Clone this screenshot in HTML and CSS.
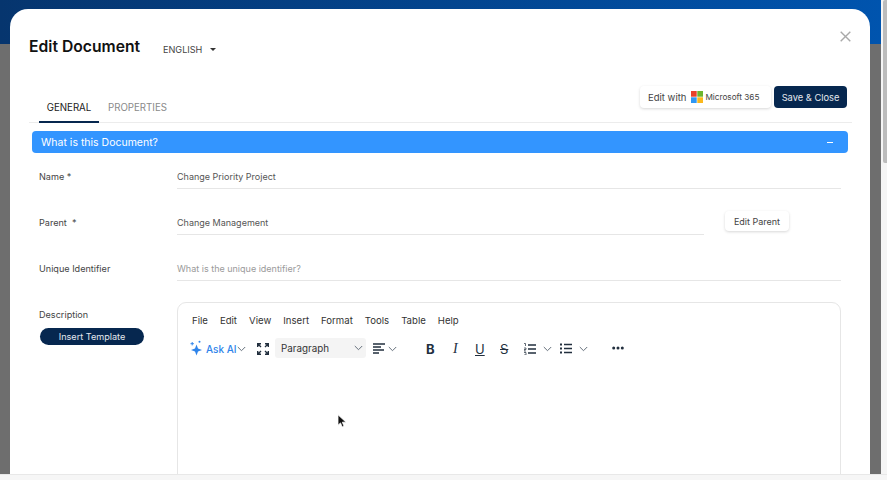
FILE: index.html
```html
<!DOCTYPE html>
<html lang="en">
<head>
<meta charset="utf-8">
<title>Edit Document</title>
<link rel="stylesheet" href="styles.css">
</head>
<body>
<div class="page">
  <div class="viewport">
    <div class="topbar"></div>
    <div class="backdrop"></div>
    <div class="modal">
      <header class="modal-head">
        <h1 class="title">Edit Document</h1>
        <button class="lang">ENGLISH<span class="caret"></span></button>
        <svg class="close" width="11" height="11" viewBox="0 0 11 11"><path d="M.7.7l9.600 9.600M10.300.7L.7 10.300" stroke="#a9a9a9" stroke-width="1.400" fill="none"/></svg>
      </header>
      <div class="tabbar">
        <div class="tabs">
          <div class="tab active">GENERAL</div>
          <div class="tab">PROPERTIES</div>
        </div>
        <div class="actions">
          <button class="btn-light ms"><span>Edit with</span>
            <svg class="ms-logo" width="12" height="12" viewBox="0 0 12 12"><rect width="5.700" height="5.700" fill="#e8412a"/><rect x="6.300" width="5.700" height="5.700" fill="#6cb52d"/><rect y="6.300" width="5.700" height="5.700" fill="#2f97f3"/><rect x="6.300" y="6.300" width="5.700" height="5.700" fill="#fbb81c"/></svg>
            <span class="ms-name">Microsoft 365</span></button>
          <button class="btn-dark">Save &amp; Close</button>
        </div>
      </div>
      <div class="accordion"><span>What is this Document?</span><span class="minus"></span></div>
      <div class="form">
        <div class="row">
          <label class="label">Name *</label>
          <div class="field">Change Priority Project</div>
        </div>
        <div class="row">
          <label class="label">Parent&nbsp; *</label>
          <div class="field">Change Management</div>
          <button class="btn-light parent">Edit Parent</button>
        </div>
        <div class="row">
          <label class="label">Unique Identifier</label>
          <div class="field placeholder">What is the unique identifier?</div>
        </div>
        <div class="row desc">
          <div class="desc-side">
            <label class="label">Description</label>
            <button class="pill">Insert Template</button>
          </div>
          <div class="editor">
            <nav class="menu">
              <span>File</span><span>Edit</span><span>View</span><span>Insert</span><span>Format</span><span>Tools</span><span>Table</span><span>Help</span>
            </nav>
            <div class="toolbar">
              <svg class="spark" width="14" height="16" viewBox="0 0 14 16"><path d="M6.500 4.500L8 8.500l4 1.500-4 1.500L6.500 15.500 5 11.500 1 10l4-1.500z" fill="#2f84ea"/><path d="M2.200 2v3.400M.5 3.700h3.400" stroke="#2f84ea" stroke-width="1"/><circle cx="9.500" cy="1.800" r="1" fill="#2f84ea"/></svg>
              <span class="ask">Ask AI</span>
              <svg class="chev c-ask" width="9" height="6" viewBox="0 0 9 6"><path d="M.8 1l3.700 3.700L8.200 1"/></svg>
              <svg class="expand" width="12" height="12" viewBox="0 0 12 12"><path d="M.7 4V.7H4M8 .7h3.300V4M.7 8v3.300H4M8 11.300h3.300V8M1 1l3 3M11 1L8 4M1 11l3-3M11 11L8 8" fill="none" stroke="#222f3e" stroke-width="1.400"/></svg>
              <div class="select"><span>Paragraph</span><svg class="chev" width="9" height="6" viewBox="0 0 9 6"><path d="M.8 1l3.700 3.700L8.200 1"/></svg></div>
              <svg class="align" width="12" height="11" viewBox="0 0 12 11"><path d="M0 1h12M0 4h8M0 7h11M0 10h6" stroke="#222f3e" stroke-width="1.300"/></svg>
              <svg class="chev c-align" width="9" height="6" viewBox="0 0 9 6"><path d="M.8 1l3.700 3.700L8.200 1"/></svg>
              <b class="fmt bold">B</b>
              <i class="fmt italic">I</i>
              <u class="fmt under">U</u>
              <s class="fmt strike">S</s>
              <svg class="list ol" width="12" height="12" viewBox="0 0 12 12"><path d="M4 2h8M4 6h8M4 10h8" stroke="#222f3e" stroke-width="1.300"/><path d="M0 .5h1.500v2.500M0 5h2v1.500H0V8h2M0 9.500h2V12H0" fill="none" stroke="#222f3e" stroke-width=".7"/></svg>
              <svg class="chev c-ol" width="9" height="6" viewBox="0 0 9 6"><path d="M.8 1l3.700 3.700L8.200 1"/></svg>
              <svg class="list ul" width="12" height="11" viewBox="0 0 12 11"><path d="M4 1.500h8M4 5.500h8M4 9.500h8" stroke="#222f3e" stroke-width="1.300"/><path d="M0 .5h2v2H0zM0 4.500h2v2H0zM0 8.500h2v2H0z" fill="#222f3e"/></svg>
              <svg class="chev c-ul" width="9" height="6" viewBox="0 0 9 6"><path d="M.8 1l3.700 3.700L8.200 1"/></svg>
              <svg class="more" width="12" height="4" viewBox="0 0 12 4"><circle cx="1.700" cy="2" r="1.500"/><circle cx="6" cy="2" r="1.500"/><circle cx="10.300" cy="2" r="1.500"/></svg>
            </div>
          </div>
        </div>
      </div>
    </div>
    <svg class="cursor" width="10" height="14" viewBox="0 0 10 14"><path d="M1 .8v10.400l2.500-2.300 1.700 4 1.800-.8-1.700-3.900H9z" fill="#111" stroke="#fff" stroke-width=".8"/></svg>
  </div>
  <div class="scroll-v"><div class="thumb"></div></div>
  <div class="scroll-h"></div>
</div>
</body>
</html>
```
FILE: styles.css
```css
* { box-sizing: border-box; }
html, body { margin: 0; height: 100%; overflow: hidden; }
body { font-family: Inter, "Liberation Sans", sans-serif; color: #333; }
button { font: inherit; cursor: pointer; }

.page {
  display: grid;
  grid-template-columns: 1fr 6px;
  grid-template-rows: 1fr 6px;
  width: 887px;
  height: 480px;
  background: #f6f6f6;
}
.viewport {
  position: relative;
  overflow: hidden;
  background: #fff;
  grid-column: 1;
  grid-row: 1;
}
.scroll-v { grid-column: 2; grid-row: 1; background: #f5f5f5; padding-left: 2px; }
.thumb { height: 163px; background: #bcbcbc; border-radius: 2px 0 0 2px; }
.scroll-h { grid-column: 1 / span 2; grid-row: 2; background: #f6f6f6; border-top: 1px solid #e8e8e8; }

.topbar {
  height: 44px;
  background: linear-gradient(90deg, #06356e 0%, #0054ae 100%);
}
.backdrop {
  position: absolute;
  inset: 44px 0 0 0;
  background: #6e6e6e;
}
.modal {
  position: absolute;
  left: 10px;
  top: 9px;
  width: 860px;
  height: 560px;
  background: #fff;
  border-radius: 18px;
  padding: 0 19px;
}
.modal-head {
  display: flex;
  align-items: center;
  height: 76px;
  position: relative;
}
.title {
  margin: 0;
  font-size: 15.700px;
  line-height: 20px;
  font-weight: 600;
  color: #111;
  white-space: nowrap;
}
.lang {
  display: flex;
  align-items: center;
  margin-left: 23px;
  padding: 0;
  border: 0;
  background: none;
  font-size: 9.100px;
  color: #444;
  position: relative;
  top: 2px;
}
.caret {
  margin-left: 8px;
  border-left: 3px solid transparent;
  border-right: 3px solid transparent;
  border-top: 3px solid #333;
}
.close { position: absolute; left: 811px; top: 22px; }

.tabbar {
  display: flex;
  justify-content: space-between;
  align-items: flex-start;
  height: 38px;
  border-bottom: 1px solid #ececec;
  width: 823px;
}
.tabs { display: flex; padding-left: 10px; padding-top: 7px; height: 38px; }
.tab {
  font-size: 9.700px;
  line-height: 32px;
  color: #8a8a8a;
  height: 31px;
}
.tab.active {
  color: #222;
  width: 60px;
  text-align: center;
  margin-right: 9px;
  border-bottom: 2px solid #06274f;
}
.actions { display: flex; gap: 3px; padding-right: 5px; margin-top: 1px; }
.btn-light {
  height: 22px;
  background: #fff;
  border: 0;
  border-radius: 4px;
  box-shadow: 0 1px 3px rgba(0,0,0,.16);
  font-size: 9.500px;
  color: #444;
  padding: 0 8px;
  white-space: nowrap;
}
.ms { display: flex; align-items: center; width: 131px; }
.ms-logo { margin-left: 5px; flex: none; }
.ms-name { margin-left: 2px; font-size: 8.200px; }
.btn-dark {
  height: 22px;
  width: 73px;
  padding: 0;
  background: #06274f;
  border: 0;
  border-radius: 4px;
  color: #e4e8ee;
  font-size: 9.300px;
  white-space: nowrap;
}
.accordion {
  display: flex;
  justify-content: space-between;
  align-items: center;
  width: 816px;
  height: 22px;
  margin: 8px 0 0 3px;
  padding: 1px 15px 0 9px;
  background: #3395ff;
  border-radius: 4px;
  color: #fff;
  font-size: 10.500px;
}
.minus { width: 6px; height: 1px; background: #fff; }

.form { padding: 0 8px 0 10px; }
.row {
  display: flex;
  align-items: center;
  height: 46px;
  width: 802px;
}
.label { width: 138px; flex: none; font-size: 9.100px; color: #444; }
.field {
  flex: 1;
  height: 25px;
  line-height: 25px;
  border-bottom: 1px solid #e6e6e6;
  font-size: 9px;
  color: #555;
}
.placeholder { color: #9a9a9a; }
.parent { flex: none; width: 64px; margin: 0 52px 0 21px; padding: 0; height: 20px; position: relative; top: -1px; font-size: 9px; }
.desc { align-items: flex-start; height: 300px; padding-top: 18px; }
.desc-side { width: 138px; flex: none; display: flex; flex-direction: column; align-items: flex-start; }
.desc-side .label { line-height: 12px; }
.pill {
  margin-top: 7px;
  margin-left: 1px;
  width: 104px;
  height: 17px;
  padding: 0;
  background: #06274f;
  color: #e4e8ee;
  border: 0;
  border-radius: 9px;
  font-size: 9.100px;
  white-space: nowrap;
}
.editor {
  flex: 1;
  height: 300px;
  border: 1px solid #e6e6e6;
  border-radius: 9px;
  background: #fff;
  margin-top: -7px;
}
.menu {
  display: flex;
  gap: 12px;
  padding: 11px 0 0 14px;
  font-size: 9.600px;
  line-height: 13px;
  color: #333;
}
.toolbar {
  position: relative;
  height: 24px;
  margin-top: 10px;
}
.toolbar > * { position: absolute; }
.chev { fill: none; stroke: #66707c; stroke-width: 1; }
.spark { left: 12px; top: 3px; }
.ask { left: 28px; top: 5px; color: #2f84ea; font-size: 10px; font-weight: 500; line-height: 14px; }
.c-ask { left: 59px; top: 9px; }
.expand { left: 79px; top: 6px; }
.select {
  left: 97px;
  top: 1px;
  width: 91px;
  height: 20px;
  background: #f4f4f4;
  border-radius: 3px;
  display: flex;
  align-items: center;
  justify-content: space-between;
  padding: 0 3px 0 6px;
  font-size: 9.800px;
  color: #333;
}
.align { left: 195px; top: 6px; }
.c-align { left: 210px; top: 9px; }
.fmt { font-size: 13px; line-height: 14px; top: 5px; color: #222f3e; text-decoration-thickness: 1px; }
.bold { left: 248px; font-weight: 700; }
.italic { left: 275px; font-family: "Liberation Serif", serif; font-size: 14px; }
.under { left: 297px; }
.strike { left: 322px; }
.ol { left: 346px; top: 6px; }
.c-ol { left: 365px; top: 9px; }
.ul { left: 382px; top: 6px; }
.c-ul { left: 401px; top: 9px; }
.more { left: 434px; top: 9px; fill: #222f3e; }
.cursor { position: absolute; left: 337px; top: 414px; }
```
